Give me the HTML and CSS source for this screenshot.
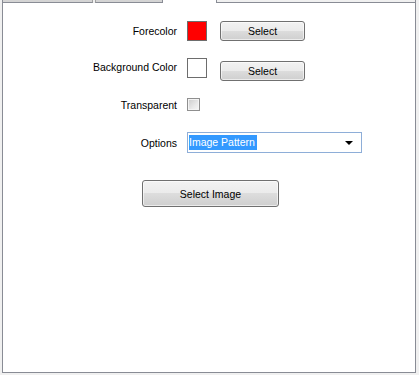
FILE: index.html
```html
<!DOCTYPE html>
<html lang="en">
<head>
    <meta charset="UTF-8">
    <title>Background Settings</title>
    <link rel="stylesheet" href="styles.css">
</head>
<body>
    <div class="tabstrip">
        <div class="tab first"></div>
        <div class="tab second"></div>
        <div class="tab active"></div>
        <div class="tab-rest"></div>
    </div>

    <div class="panel">
        <div class="row row-fore">
            <span class="label">Forecolor</span>
            <span class="swatch red"></span>
            <button class="btn select-btn">Select</button>
        </div>

        <div class="row row-back">
            <span class="label">Background Color</span>
            <span class="swatch"></span>
            <button class="btn select-btn shifted">Select</button>
        </div>

        <div class="row row-trans">
            <span class="label">Transparent</span>
            <span class="checkbox"></span>
        </div>

        <div class="row row-options">
            <span class="label">Options</span>
            <div class="combo">
                <span class="combo-value">Image Pattern</span>
                <span class="combo-arrow"></span>
            </div>
        </div>

        <button class="btn image-btn">Select Image</button>
    </div>
</body>
</html>
```

FILE: styles.css
```css
* {
    margin: 0;
    padding: 0;
    box-sizing: border-box;
}

body {
    background-color: #f0f0f0;
    font-family: 'Liberation Sans', Arial, sans-serif;
    font-size: 10.5px;
    color: #000;
    width: 419px;
    height: 375px;
    padding-left: 2px;
}

.tabstrip {
    display: flex;
    height: 3px;
    width: 414px;
}

.tab {
    height: 3px;
    background: #d4d4d4;
    border-right: 1px solid #898c95;
    border-bottom: 1px solid #898c95;
}

.tab.first {
    width: 91px;
    border-left: 1px solid #898c95;
    border-right: 1px solid #a0a0a0;
    padding-left: 2px;
}

.tab.second {
    width: 68px;
    margin-left: 2px;
    border-left: 1px solid #a0a0a0;
}

.tab.active {
    width: 54px;
    background: #fff;
    border-left: none;
    border-bottom: none;
}

.tab-rest {
    flex: 1;
    border-bottom: 1px solid #898c95;
    border-right: 1px solid #898c95;
}

.panel {
    width: 414px;
    height: 370px;
    background: #fff;
    border: 1px solid #898c95;
    border-top: none;
    padding-top: 18px;
}

.row {
    display: flex;
    align-items: center;
}

.label {
    width: 174px;
    padding-right: 10px;
    text-align: right;
    box-sizing: content-box;
    white-space: nowrap;
}

.row-fore {
    height: 20px;
}

.row-back {
    height: 23px;
    margin-top: 17px;
    align-items: flex-start;
}

.row-back .label {
    margin-top: 3px;
}

.row-trans {
    height: 13px;
    margin-top: 17px;
}

.row-options {
    height: 21px;
    margin-top: 21px;
}

.swatch {
    width: 20px;
    height: 20px;
    border: 1px solid #6d6d6d;
    background: #fff;
    margin-right: 13px;
}

.swatch.red {
    background: #ff0000;
}

.btn {
    font-family: 'Liberation Sans', Arial, sans-serif;
    font-size: 10.5px;
    color: #000;
    border: 1px solid #707070;
    border-radius: 3px;
    background: linear-gradient(#f2f2f2 0%, #ebebeb 50%, #dddddd 50%, #cfcfcf 100%);
    box-shadow: inset 0 0 0 1px rgba(255, 255, 255, 0.6);
}

.select-btn {
    width: 85px;
    height: 20px;
}

.select-btn.shifted {
    margin-top: 3px;
}

.checkbox {
    width: 13px;
    height: 13px;
    border: 1px solid #8f8f8f;
    background: linear-gradient(135deg, #cbcbcb 0%, #e9e9e9 60%, #f7f7f7 100%);
    box-shadow: inset 0 0 0 1px #f4f4f4;
}

.combo {
    width: 175px;
    height: 21px;
    border: 1px solid #8eaed8;
    display: flex;
    align-items: center;
    justify-content: space-between;
    padding: 0 8px 0 1px;
}

.combo-value {
    background: #3399ff;
    color: #fff;
    height: 15px;
    line-height: 15px;
    padding-right: 2px;
}

.combo-arrow {
    width: 0;
    height: 0;
    border-left: 4px solid transparent;
    border-right: 4px solid transparent;
    border-top: 4px solid #000;
}

.image-btn {
    display: block;
    width: 137px;
    height: 27px;
    margin-top: 27px;
    margin-left: 139px;
}
```
